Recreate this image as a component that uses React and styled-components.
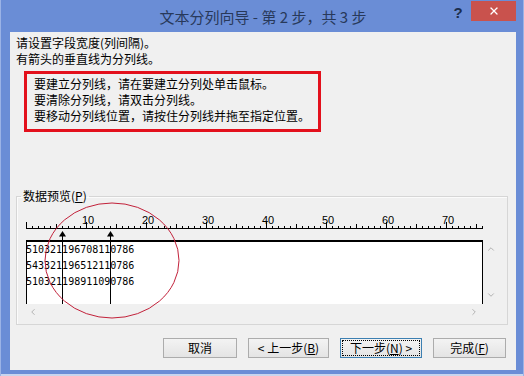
import styled, { createGlobalStyle } from "styled-components";
import { ChevronUp, ChevronDown, ChevronLeft, ChevronRight, X } from "lucide-react";

const GlobalStyle = createGlobalStyle`
  html, body {
    margin: 0;
    padding: 0;
    background: #6a8dd6;
  }
  body {
    font-family: "Noto Sans CJK SC", "Noto Sans", sans-serif;
  }
`;

const Window = styled.div`
  width: 524px;
  height: 376px;
  box-sizing: border-box;
  display: flex;
  flex-direction: column;
  padding: 0 8px 6px 10px;
  background: #6a8dd6;
  box-shadow: inset 1px 0 0 #9bb3e6, inset -1px 0 0 #9bb3e6, inset 0 -2px 0 #c8d5ee;
`;

const TitleBar = styled.div`
  height: 32px;
  display: grid;
  grid-template-columns: 1fr auto 1fr;
`;

const Title = styled.div`
  grid-column: 2;
  font-size: 15px;
  line-height: 33px;
  color: #28395a;
  white-space: nowrap;
`;

const Controls = styled.div`
  grid-column: 3;
  justify-self: end;
  display: flex;
  align-items: flex-start;
`;

const Help = styled.div`
  width: 26px;
  height: 26px;
  line-height: 26px;
  text-align: center;
  font-family: "Liberation Sans", sans-serif;
  font-weight: bold;
  font-size: 15px;
  color: #1c2d4c;
`;

const Close = styled.div`
  width: 45px;
  height: 20px;
  margin-top: 1px;
  background: #c9524d;
  color: #fff;
  display: flex;
  align-items: center;
  justify-content: center;
`;

const Client = styled.div`
  flex: 1;
  position: relative;
  background: #f0f0f0;
  display: flex;
  flex-direction: column;
  padding: 3px 10px 12px 6px;
  font-size: 12px;
  color: #000;
`;

const Intro = styled.div`
  line-height: 16px;
`;

const Notice = styled.div`
  align-self: flex-start;
  box-sizing: border-box;
  width: 297px;
  margin: 4px 0 0 8px;
  border: 3px solid #e3101c;
  padding: 2px 7px 5px;
  line-height: 16px;
`;

const Group = styled.fieldset`
  box-sizing: border-box;
  width: 492px;
  min-width: 0;
  margin: 57px 0 0 0;
  padding: 9px 8px 4px 3px;
  border: 1px solid #d6d6d6;
  box-shadow: inset 1px 1px 0 #fbfbfb;
`;

const Legend = styled.legend`
  margin-left: 1px;
  padding: 0 2px;
  line-height: 14px;
  font-size: 12px;
`;

const PreviewWrap = styled.div`
  position: relative;
  margin-left: 6px;
  width: 473px;
`;

const RulerSvg = styled.svg`
  display: block;
`;

const DataGrid = styled.div`
  display: grid;
  grid-template-columns: 457px 16px;
  grid-template-rows: 64px 16px;
`;

const DataBox = styled.div`
  box-sizing: border-box;
  background: #fff;
  border: 1px solid #000;
  border-top-width: 2px;
  border-bottom: none;
  font-family: "DejaVu Sans Mono", "Liberation Mono", monospace;
  font-size: 10px;
  line-height: 16px;
  color: #000;
`;

const DataLine = styled.div`
  margin-left: -1px;
`;

const VScroll = styled.div`
  display: flex;
  flex-direction: column;
  justify-content: space-between;
  align-items: center;
  padding: 4px 0;
  color: #a6a6a6;
`;

const HScroll = styled.div`
  display: flex;
  justify-content: space-between;
  align-items: center;
  padding: 0 4px 0 2px;
  color: #a6a6a6;
`;

const Overlay = styled.svg`
  position: absolute;
  left: ${(p) => p.$left}px;
  top: ${(p) => p.$top}px;
  pointer-events: none;
`;

const ButtonRow = styled.div`
  display: flex;
  justify-content: flex-end;
  gap: 11px;
  margin-top: 13px;
`;

const Button = styled.button`
  box-sizing: border-box;
  width: ${(p) => p.$w}px;
  height: 20px;
  padding: 0;
  border: 1px solid ${(p) => (p.$focused ? "#3c7fb1" : "#acacac")};
  background: linear-gradient(#f3f3f3, #e4e4e4);
  font-family: "Noto Sans CJK SC", "Noto Sans", sans-serif;
  font-size: 12px;
  line-height: 18px;
  color: #000;
  outline: ${(p) => (p.$focused ? "1px dotted #000" : "none")};
  outline-offset: -3px;
`;

const ticks = Array.from({ length: 77 }, (_, i) => i);
const labels = [10, 20, 30, 40, 50, 60, 70];
const rows = ["510321196708110786", "543321196512110786", "510321198911090786"];
const breaks = [6, 14];

function Ruler() {
  return (
    <RulerSvg width="457" height="28">
      <line x1="0" y1="16.5" x2="457" y2="16.5" stroke="#000" strokeWidth="1" />
      {ticks.map((n) => {
        const h = n % 10 === 0 ? 6 : n % 5 === 0 ? 4 : 2;
        return (
          <line key={n} x1={n * 6 + 0.5} y1={16 - h} x2={n * 6 + 0.5} y2="17" stroke="#000" strokeWidth="1" />
        );
      })}
      {labels.map((n) => (
        <text key={n} x={n * 6 - 4} y="12" fontSize="11" fontFamily="Liberation Sans, sans-serif" fill="#000">
          {n}
        </text>
      ))}
    </RulerSvg>
  );
}

export default function App() {
  return (
    <>
      <GlobalStyle />
      <Window>
        <TitleBar>
          <Title>文本分列向导 - 第 2 步，共 3 步</Title>
          <Controls>
            <Help>?</Help>
            <Close>
              <X size={12} strokeWidth={2.6} />
            </Close>
          </Controls>
        </TitleBar>
        <Client>
          <Intro>
            <div>请设置字段宽度(列间隔)。</div>
            <div>有箭头的垂直线为分列线。</div>
          </Intro>
          <Notice>
            <div>要建立分列线，请在要建立分列处单击鼠标。</div>
            <div>要清除分列线，请双击分列线。</div>
            <div>要移动分列线位置，请按住分列线并拖至指定位置。</div>
          </Notice>
          <Group>
            <Legend>
              数据预览(<u>P</u>)
            </Legend>
            <PreviewWrap>
              <Ruler />
              <DataGrid>
                <DataBox>
                  {rows.map((r, i) => (
                    <DataLine key={i}>{r}</DataLine>
                  ))}
                </DataBox>
                <VScroll>
                  <ChevronUp size={10} strokeWidth={2} />
                  <ChevronDown size={10} strokeWidth={2} />
                </VScroll>
                <HScroll>
                  <ChevronLeft size={10} strokeWidth={2} />
                  <ChevronRight size={10} strokeWidth={2} />
                </HScroll>
                <div />
              </DataGrid>
              <Overlay $left={0} $top={0} width="473" height="108">
                {breaks.map((c) => {
                  const x = c * 6 + 0.5;
                  return (
                    <g key={c}>
                      <line x1={x} y1="22" x2={x} y2="92" stroke="#000" strokeWidth="1" />
                      <polygon points={`${x - 3.5},24.5 ${x + 3.5},24.5 ${x},19`} fill="#000" />
                    </g>
                  );
                })}
              </Overlay>
            </PreviewWrap>
          </Group>
          <ButtonRow>
            <Button $w={74}>取消</Button>
            <Button $w={81}>
              &lt; 上一步(<u>B</u>)
            </Button>
            <Button $w={82} $focused>
              下一步(<u>N</u>) &gt;
            </Button>
            <Button $w={73}>
              完成(<u>F</u>)
            </Button>
          </ButtonRow>
          <Overlay $left={34} $top={170} width="136" height="118">
            <ellipse cx="68" cy="58.5" rx="67" ry="57.5" fill="none" stroke="#c2213a" strokeWidth="1" />
          </Overlay>
        </Client>
      </Window>
    </>
  );
}
